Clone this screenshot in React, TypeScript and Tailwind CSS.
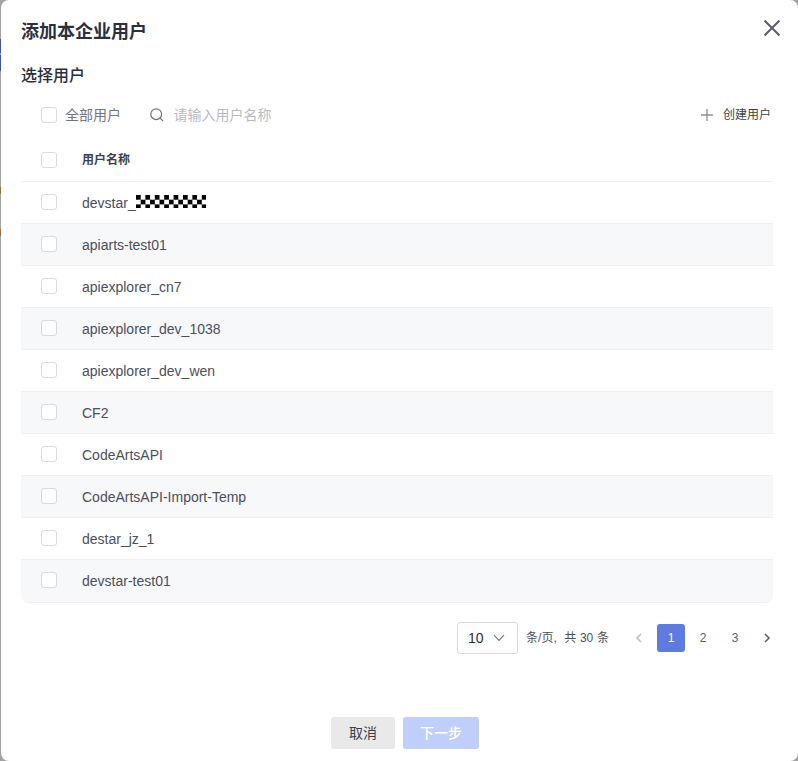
import React from "react";

const users = [
  "devstar_",
  "apiarts-test01",
  "apiexplorer_cn7",
  "apiexplorer_dev_1038",
  "apiexplorer_dev_wen",
  "CF2",
  "CodeArtsAPI",
  "CodeArtsAPI-Import-Temp",
  "destar_jz_1",
  "devstar-test01",
];

function Box() {
  return <span className="block h-4 w-4 shrink-0 rounded-[3px] border border-[#d9dade] bg-white" />;
}

function Mosaic() {
  return (
    <svg width="70" height="13" className="-mt-[2px] block" aria-hidden="true">
      <defs>
        <pattern id="chk" width="9.4" height="9.4" patternUnits="userSpaceOnUse">
          <rect width="4.7" height="4.7" fill="#000" />
          <rect x="4.7" y="4.7" width="4.7" height="4.7" fill="#000" />
        </pattern>
      </defs>
      <rect width="70" height="13" fill="url(#chk)" />
    </svg>
  );
}

export default function App() {
  return (
    <div
      className="relative h-[761px] w-[798px] overflow-hidden bg-[#a3a3a3] text-[#4a4f5c]"
      style={{ fontFamily: '"Liberation Sans", "Noto Sans CJK SC", sans-serif' }}
    >
      <div className="absolute left-0 top-[39px] h-[14px] w-[2px] bg-[#3d57a6]" />
      <div className="absolute left-0 top-[55px] h-[16px] w-[2px] bg-[#3d57a6]" />
      <div className="absolute left-0 top-[187px] h-[7px] w-[2px] bg-[#9c6d35]" />
      <div className="absolute left-0 top-[229px] h-[7px] w-[2px] bg-[#9c6d35]" />

      <div className="relative ml-px flex h-full flex-col rounded-lg bg-white pl-5 pr-[25px]">
        <div className="flex h-[64px] shrink-0 items-center justify-between pb-[1px]">
          <h1 className="text-[18px] font-semibold leading-6 text-[#2c303d]">添加本企业用户</h1>
          <svg width="18" height="18" viewBox="0 0 18 18" className="-mr-[8px] -mt-[8px]" fill="none" stroke="#575d6c" strokeWidth="2" aria-hidden="true">
            <path d="M1.5 1.5 16.5 16.5M16.5 1.5 1.5 16.5" />
          </svg>
        </div>

        <h2 className="text-[16px] font-medium leading-6 text-[#2c303d]">选择用户</h2>

        <div className="mt-[6px] flex h-[40px] shrink-0 items-center pl-5 pt-[1px]">
          <Box />
          <span className="ml-2 text-[14px] leading-5 text-[#6f7480]">全部用户</span>
          <svg width="16" height="16" viewBox="0 0 16 16" className="ml-[28px]" fill="none" stroke="#6f7480" strokeWidth="1.2" aria-hidden="true">
            <circle cx="7.2" cy="7.2" r="5.4" />
            <path d="M11.2 11.2 14 14" />
          </svg>
          <span className="ml-[8.5px] text-[14px] leading-5 text-[#b8bac0]">请输入用户名称</span>
          <div className="ml-auto flex items-center pr-[2px]">
            <svg width="14" height="14" viewBox="0 0 14 14" fill="none" stroke="#8a8e99" strokeWidth="1.3" aria-hidden="true">
              <path d="M7 1v12M1 7h12" />
            </svg>
            <span className="ml-[9px] text-[12px] leading-5 text-[#3b3f4a]">创建用户</span>
          </div>
        </div>

        <div className="shrink-0 overflow-hidden rounded-b-lg border-b border-[#eeeff2]">
          <div className="flex h-[48px] items-center border-b border-[#eeeff2] pl-5 pt-[5px]">
            <Box />
            <span className="ml-[25px] text-[12px] font-semibold leading-5 text-[#3b3f4a]">用户名称</span>
          </div>
          {users.map((name, i) => (
            <div
              key={name}
              className={
                i % 2 === 1
                  ? "flex h-[42px] items-center border-b border-[#eeeff2] bg-[#f7f8fa] pl-5 last:border-b-0"
                  : "flex h-[42px] items-center border-b border-[#eeeff2] bg-white pl-5 last:border-b-0"
              }
            >
              <div className="-mt-[2px]">
                <Box />
              </div>
              <span className="ml-[25px] flex items-center text-[14px] leading-5 text-[#4a4f5c]">
                {name}
                {i === 0 && <Mosaic />}
              </span>
            </div>
          ))}
        </div>

        <div className="mt-[19px] flex items-center justify-end">
          <div className="flex h-8 w-[61px] items-center justify-between rounded-[3px] border border-[#d9dade] pl-[10px] pr-[12px]">
            <span className="text-[14px] text-[#2c303d]">10</span>
            <svg width="12" height="8" viewBox="0 0 12 8" fill="none" stroke="#6f7480" strokeWidth="1.1" aria-hidden="true">
              <path d="M1 1.2 6 6.5 11 1.2" />
            </svg>
          </div>
          <span className="ml-2 mr-4 text-[12px] text-[#4a4f5c] [word-spacing:0.4px]">条/页,&nbsp; 共 30 条</span>
          <div className="-mr-2 flex items-center gap-1">
            <span className="flex h-7 w-7 items-center justify-center">
              <svg width="8" height="10" viewBox="0 0 8 10" fill="none" stroke="#b8bac0" strokeWidth="1.5" aria-hidden="true"><path d="M6 1 2 5l4 4" /></svg>
            </span>
            <span className="flex h-7 w-7 items-center justify-center rounded-[3px] bg-[#5e7ce0] text-[12px] font-medium text-white">1</span>
            <span className="flex h-7 w-7 items-center justify-center text-[12px] text-[#575d6c]">2</span>
            <span className="flex h-7 w-7 items-center justify-center text-[12px] text-[#575d6c]">3</span>
            <span className="flex h-7 w-7 items-center justify-center">
              <svg width="8" height="10" viewBox="0 0 8 10" fill="none" stroke="#575d6c" strokeWidth="1.5" aria-hidden="true"><path d="M2 1l4 4-4 4" /></svg>
            </span>
          </div>
        </div>

        <div className="mt-[63px] ml-4 flex justify-center gap-2">
          <span className="flex h-8 w-16 items-center justify-center rounded-[3px] bg-[#e9e9e9] text-[14px] text-[#3b3f4a]">取消</span>
          <span className="flex h-8 w-[76px] items-center justify-center rounded-[3px] bg-[#bfcefa] text-[14px] font-medium text-white">下一步</span>
        </div>
      </div>
    </div>
  );
}
